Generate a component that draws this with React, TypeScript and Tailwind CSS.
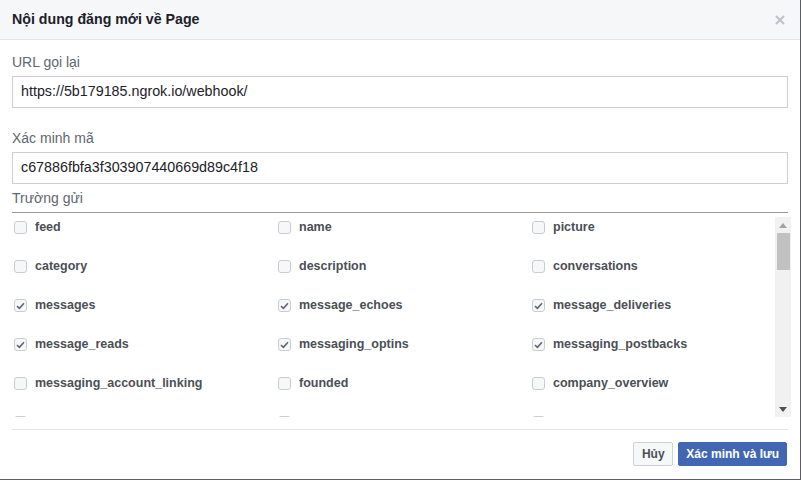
import React from "react";

type Item = { label: string; checked: boolean };

const rows: Item[][] = [
  [
    { label: "feed", checked: false },
    { label: "name", checked: false },
    { label: "picture", checked: false },
  ],
  [
    { label: "category", checked: false },
    { label: "description", checked: false },
    { label: "conversations", checked: false },
  ],
  [
    { label: "messages", checked: true },
    { label: "message_echoes", checked: true },
    { label: "message_deliveries", checked: true },
  ],
  [
    { label: "message_reads", checked: true },
    { label: "messaging_optins", checked: true },
    { label: "messaging_postbacks", checked: true },
  ],
  [
    { label: "messaging_account_linking", checked: false },
    { label: "founded", checked: false },
    { label: "company_overview", checked: false },
  ],
  [
    { label: "mission", checked: false },
    { label: "products", checked: false },
    { label: "general_info", checked: false },
  ],
];

function Check({ checked }: { checked: boolean }) {
  return (
    <span className="flex h-[13px] w-[13px] shrink-0 items-center justify-center rounded-[3px] border border-[#c8ccd2] bg-[#f6f7f9]">
      {checked && (
        <svg width="9" height="8" viewBox="0 0 9 8">
          <path d="M1 4.2 L3.4 6.4 L8 1.2" fill="none" stroke="#5f6673" strokeWidth="1.6" />
        </svg>
      )}
    </span>
  );
}

export default function App() {
  return (
    <div
      className="h-[480px] w-[801px] overflow-hidden bg-[#5a5d63]"
      style={{ fontFamily: '"Liberation Sans", Arial, sans-serif' }}
    >
      <div className="flex h-[479px] w-[800px] flex-col bg-white">
        <div className="flex h-[40px] shrink-0 items-center justify-between border-b border-[#e5e5e5] bg-[#f6f7f9] pl-[12px] pr-[15px]">
          <span className="text-[14.2px] font-bold text-[#1d2129]">Nội dung đăng mới về Page</span>
          <svg width="10" height="10" viewBox="0 0 10 10">
            <path d="M1 1 L9 9 M9 1 L1 9" stroke="#bec2c9" strokeWidth="2.2" />
          </svg>
        </div>
        <div className="flex flex-col px-[12px]">
          <div className="mb-[3px] mt-[11px] h-[22px] text-[14px] leading-[22px] text-[#606770]">URL gọi lại</div>
          <div className="flex h-[32px] items-center border border-[#ccd0d5] pl-[8px] text-[14.3px] text-[#1d2129]">
            https://5b179185.ngrok.io/webhook/
          </div>
          <div className="mb-[3px] mt-[19px] h-[22px] text-[14px] leading-[22px] text-[#606770]">Xác minh mã</div>
          <div className="flex h-[32px] items-center border border-[#ccd0d5] pl-[8px] text-[14.3px] text-[#1d2129]">
            c67886fbfa3f303907440669d89c4f18
          </div>
          <div className="mb-[3px] mt-[3px] h-[22px] text-[14px] leading-[22px] text-[#606770]">Trường gửi</div>
          <div className="h-[1px] bg-[#9a9a9a]" />
          <div className="mr-[-3px] mt-[4px] flex h-[200px] overflow-hidden">
            <div className="flex-1 overflow-hidden pt-[4px]">
              {rows.map((r, i) => (
                <div key={i} className="grid h-[39px] grid-cols-[264px_254px_1fr] items-start">
                  {r.map((it) => (
                    <div key={it.label} className="flex items-center gap-[8px] pl-[2px]">
                      <Check checked={it.checked} />
                      <span className="text-[12.5px] font-bold leading-[13px] text-[#4b4f56]">{it.label}</span>
                    </div>
                  ))}
                </div>
              ))}
            </div>
            <div className="flex w-[16px] shrink-0 flex-col items-center bg-[#f1f1f1]">
              <div className="flex h-[16px] items-center justify-center">
                <svg width="8" height="5" viewBox="0 0 8 5">
                  <path d="M0 5 L4 0 L8 5 Z" fill="#a3a3a3" />
                </svg>
              </div>
              <div className="h-[37px] w-[13px] bg-[#c1c1c1]" />
              <div className="flex-1" />
              <div className="flex h-[16px] items-center justify-center">
                <svg width="8" height="5" viewBox="0 0 8 5">
                  <path d="M0 0 L4 5 L8 0 Z" fill="#505050" />
                </svg>
              </div>
            </div>
          </div>
          <div className="mt-[12px] h-[1px] bg-[#e5e5e5]" />
          <div className="mt-[12px] flex justify-end gap-[5px] pr-[1px]">
            <button className="flex h-[24px] w-[40px] items-center justify-center rounded-[2px] border border-[#ced0d4] bg-[#f6f7f9] text-[12px] font-bold text-[#4b4f56]">
              Hủy
            </button>
            <button className="flex h-[24px] items-center rounded-[2px] border border-[#4267b2] bg-[#4267b2] px-[7px] text-[12px] font-bold text-white">
              Xác minh và lưu
            </button>
          </div>
        </div>
      </div>
    </div>
  );
}
